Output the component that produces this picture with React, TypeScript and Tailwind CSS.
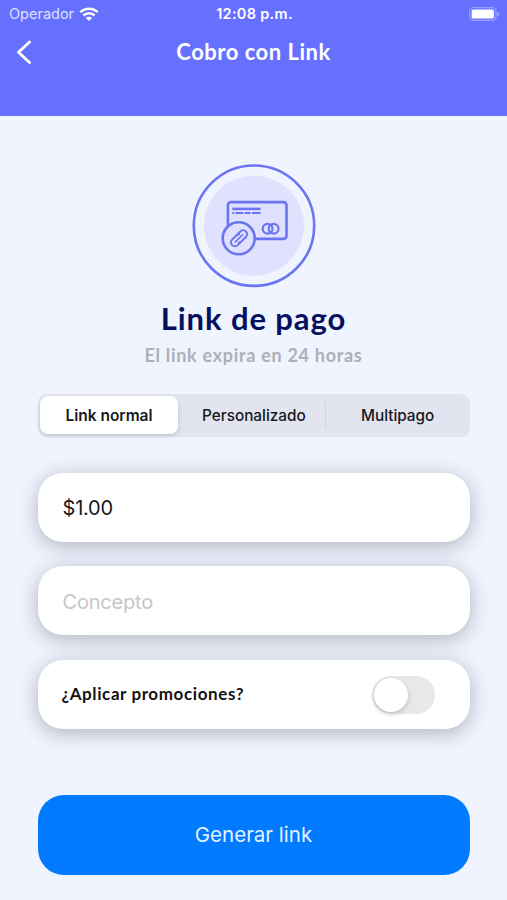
import { useState } from 'react'

const tabs = ['Link normal', 'Personalizado', 'Multipago']

function WifiIcon() {
  return (
    <svg className="ml-[5px] h-[15px] w-5" viewBox="0 0 20 15" fill="none" stroke="#fff" strokeWidth="2.5">
      <path d="M1.3 5.2a12.4 12.4 0 0 1 17.4 0" />
      <path d="M4.4 8.5a8 8 0 0 1 11.2 0" />
      <path d="M10 13.9 6.9 11a4.3 4.3 0 0 1 6.2 0Z" fill="#fff" stroke="none" />
    </svg>
  )
}

function BatteryIcon() {
  return (
    <svg className="h-[15px] w-[31px]" viewBox="0 0 31 15" fill="none">
      <rect x="0.6" y="0.6" width="26.4" height="12.8" rx="4" stroke="#fff" strokeOpacity="0.35" strokeWidth="1.2" />
      <rect x="2.6" y="2.4" width="22.4" height="9.2" rx="2.2" fill="#fff" />
      <path d="M28.4 4.7v4.6c1.2-.5 1.8-1.3 1.8-2.3s-.6-1.8-1.8-2.3Z" fill="#fff" fillOpacity="0.4" />
    </svg>
  )
}

function PaymentLinkIcon() {
  return (
    <svg className="h-[124px] w-[124px]" viewBox="9 9 124 124" fill="none" stroke="#6b75f2">
      <circle cx="71" cy="70.7" r="60.2" strokeWidth="2.6" />
      <circle cx="71" cy="70.7" r="50" fill="#dfe1ff" stroke="none" />
      {/* card */}
      <rect x="44.9" y="47.1" width="58.6" height="36.8" rx="3" strokeWidth="2.6" />
      <path d="M49.3 53.9h28.2" strokeWidth="2.5" />
      <path d="M49.3 58h2M52.5 58h8M61.7 58h6M69 58h8.5" strokeWidth="2.2" />
      <circle cx="84.6" cy="73.8" r="4.9" strokeWidth="2.2" />
      <circle cx="90.6" cy="73.8" r="4.9" strokeWidth="2.2" />
      {/* chain badge */}
      <circle cx="55.7" cy="83.3" r="16" fill="#dfe1ff" strokeWidth="2.6" />
      <g transform="rotate(-45 56 83.3)" strokeWidth="2" strokeLinecap="round">
        <path d="M53.5 87.2h-3.3a3.9 3.9 0 0 1 0-7.8h6.3a3.9 3.9 0 0 1 2.4 1" />
        <path d="M58.5 79.4h3.3a3.9 3.9 0 0 1 0 7.8h-6.3a3.9 3.9 0 0 1-2.4-1" />
        <path d="M51 83.3h10" strokeWidth="1.7" />
      </g>
    </svg>
  )
}

export default function App() {
  const [activeTab, setActiveTab] = useState(0)
  const [promo, setPromo] = useState(false)
  const [amount, setAmount] = useState('$1.00')
  const [concept, setConcept] = useState('')

  return (
    <div className="flex h-[900px] w-full flex-col bg-[#eff4ff] font-['Inter',sans-serif]">
      {/* Header */}
      <header className="h-[115.5px] shrink-0 bg-[#6670ff] text-white">
        <div className="grid h-7 grid-cols-3 items-center pr-[7px] pl-[9px] text-[14.5px]">
          <div className="flex items-center">
            <span className="text-[#dfe1ff]">Operador</span>
            <WifiIcon />
          </div>
          <span className="text-center font-semibold tracking-[0.3px] whitespace-nowrap">12:08 p.m.</span>
          <div className="flex justify-end">
            <BatteryIcon />
          </div>
        </div>
        <div className="grid h-[47px] grid-cols-[60px_1fr_60px] items-center">
          <button aria-label="Atrás" className="pl-4">
            <svg className="h-6 w-4" viewBox="0 0 16 24" fill="none" stroke="#fff" strokeWidth="2.9" strokeLinecap="round" strokeLinejoin="round">
              <path d="M13.5 2 2.5 12.3l11 10.2" />
            </svg>
          </button>
          <h1 className="text-center font-['Lato',sans-serif] text-[22px] font-bold tracking-[0.5px]">Cobro con Link</h1>
        </div>
      </header>

      <main className="flex flex-1 flex-col px-[37.5px]">
        {/* Intro */}
        <div className="flex flex-col items-center pt-12 font-['Lato',sans-serif] font-bold">
          <PaymentLinkIcon />
          <h2 className="mt-2.5 text-[31px] leading-10 tracking-[0.9px] text-[#06105f]">Link de pago</h2>
          <p className="mt-[5px] text-[18px] leading-6 tracking-[0.7px] text-[#adb0b7]">El link expira en 24 horas</p>
        </div>

        {/* Link type */}
        <div className="mt-[27px] flex h-[43px] rounded-[9px] bg-[#e2e5f0] py-[2.5px] pl-[2.5px]">
          {tabs.map((tab, i) => (
            <button
              key={tab}
              onClick={() => setActiveTab(i)}
              className={
                i === activeTab
                  ? 'mr-[4px] w-[138px] rounded-lg bg-white pt-[2px] text-[15.5px] font-semibold text-[#17181c] shadow-[0_2px_5px_rgba(0,0,0,0.14)]'
                  : 'flex-1 border-r border-transparent pt-[2px] pl-px text-[15.3px] font-medium text-[#17181c] nth-2:my-[6px] nth-2:border-[#d0d3df]'
              }
            >
              {tab}
            </button>
          ))}
        </div>

        {/* Form */}
        <div className="mt-9 flex flex-col gap-[24.5px]">
          <input
            value={amount}
            onChange={(e) => setAmount(e.target.value)}
            className="h-[69px] rounded-[25px] bg-white px-[25px] pt-[2px] text-[20px] tracking-[-0.2px] text-[#17181c] shadow-[0_4px_20px_rgba(40,40,50,0.32)] outline-none"
          />
          <input
            value={concept}
            onChange={(e) => setConcept(e.target.value)}
            placeholder="Concepto"
            className="h-[69px] rounded-[25px] bg-white px-[25px] pt-[2px] text-[20px] tracking-[-0.2px] shadow-[0_4px_20px_rgba(40,40,50,0.32)] outline-none placeholder:text-[#c6c6c8]"
          />
          <div className="flex h-[69px] items-center justify-between rounded-[25px] bg-white pr-[35px] pl-[24px] shadow-[0_4px_20px_rgba(40,40,50,0.32)]">
            <span className="font-['Lato',sans-serif] text-[17px] font-bold tracking-[0.6px] text-[#111]">¿Aplicar promociones?</span>
            <button
              role="switch"
              aria-checked={promo}
              aria-label="Aplicar promociones"
              onClick={() => setPromo(!promo)}
              className={`mt-px flex h-[38px] w-[63px] items-center rounded-full p-[2px] ${promo ? 'justify-end bg-[#34c759]' : 'bg-[#e8e8ea]'}`}
            >
              <span className="size-[34px] rounded-full bg-white shadow-[0_2px_5px_rgba(0,0,0,0.2)]" />
            </button>
          </div>
        </div>

        <button className="mt-[66px] h-[80.5px] rounded-[26px] bg-[#007aff] pt-px text-[20.5px] text-[#e4f1ff]">
          Generar link
        </button>
      </main>
    </div>
  )
}
